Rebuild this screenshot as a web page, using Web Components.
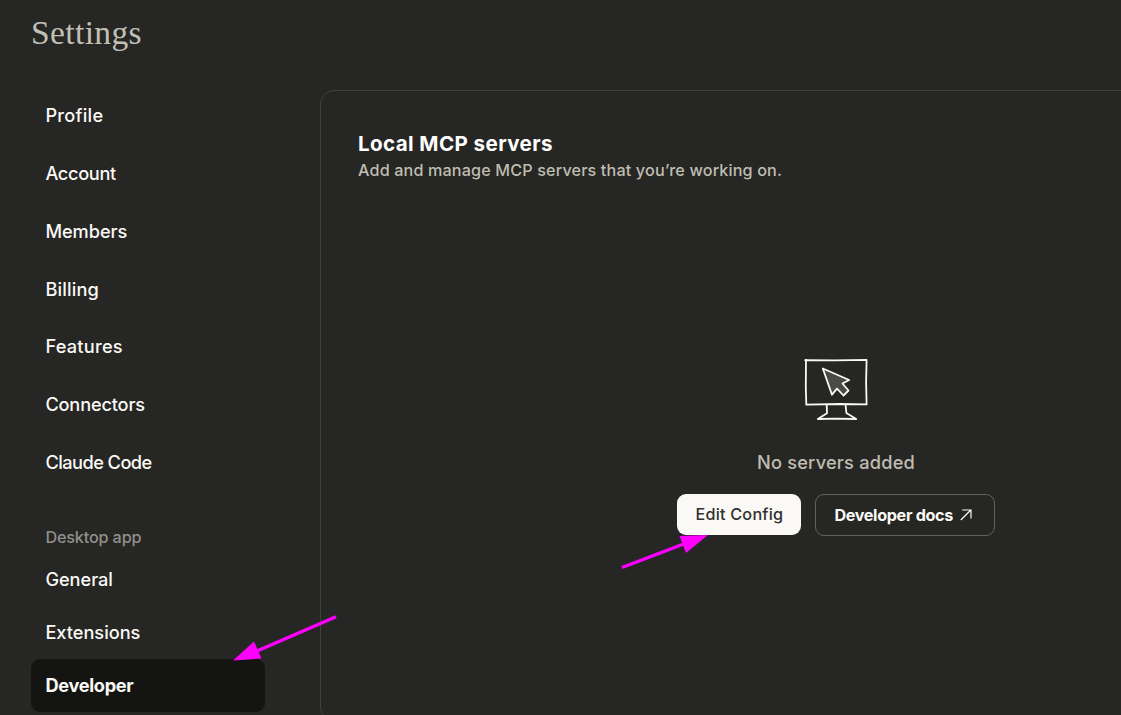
<!DOCTYPE html>
<html lang="en">
<head>
<meta charset="utf-8">
<title>Settings</title>
<style>
html,body{margin:0;height:100%;overflow:hidden;background:#262624}
</style>
</head>
<body>
<settings-page></settings-page>
<script>
const define = (name, html, setup) => {
  const t = document.createElement('template');
  t.innerHTML = html;
  customElements.define(name, class extends HTMLElement {
    connectedCallback() {
      if (this.shadowRoot) return;
      this.attachShadow({mode: 'open'}).append(t.content.cloneNode(true));
      if (setup) setup(this);
    }
  });
};

/* Single-line label whose tracking is adjusted so it spans the given measure. */
define('fit-text', `<style>:host{display:inline-block;white-space:nowrap}span{display:inline-block}</style><span><slot></slot></span>`, el => {
  const span = el.shadowRoot.querySelector('span');
  const n = el.textContent.length, w = span.getBoundingClientRect().width;
  span.style.letterSpacing = ((+el.getAttribute('measure') - w) / n).toFixed(3) + 'px';
});

define('nav-item', `<style>
:host{display:flex;align-items:center;box-sizing:border-box;height:var(--row,57.8px);padding:0 0 .4px 14.4px;border-radius:9px;color:#faf9f5;font-weight:500;font-size:18.2px}
:host([active]){background:#141413;font-weight:700}
</style><slot></slot>`);

define('side-nav', `<style>
:host{display:block;width:234px;margin-left:31px}
.main{padding-top:22.6px}
h2{margin:0;padding:35.6px 0 0 14.4px;height:26px;line-height:21px;font-size:16.2px;font-weight:450;color:#91908a}
.app{--row:53px}
</style>
<div class="main">
<nav-item><fit-text measure="58">Profile</fit-text></nav-item>
<nav-item><fit-text measure="70.5">Account</fit-text></nav-item>
<nav-item><fit-text measure="82">Members</fit-text></nav-item>
<nav-item><fit-text measure="53.5">Billing</fit-text></nav-item>
<nav-item><fit-text measure="77.5">Features</fit-text></nav-item>
<nav-item><fit-text measure="99.5">Connectors</fit-text></nav-item>
<nav-item><fit-text measure="106.3">Claude Code</fit-text></nav-item>
</div>
<h2><fit-text measure="96">Desktop app</fit-text></h2>
<div class="app">
<nav-item><fit-text measure="67.5">General</fit-text></nav-item>
<nav-item><fit-text measure="95">Extensions</fit-text></nav-item>
<nav-item active><fit-text measure="88">Developer</fit-text></nav-item>
</div>`);

define('monitor-icon', `<style>:host{display:block;width:66px;height:64px}svg{display:block}</style>
<svg width="66" height="64" viewBox="803 357 66 64" fill="none" stroke="#faf9f5" stroke-width="1.8" stroke-linejoin="round" stroke-linecap="round">
<path d="M805.2 360.2L835 360.4L866.6 359.8L866.1 382L866.6 404.4L840 404L806.3 404.6L805.8 387L806 360"/>
<path d="M826.7 405L827 413.2L817.8 419L836 418.6L856.2 419L846.4 413L845.6 405"/>
<path fill="#4a4a48" d="M822.8 368.5L849.2 380L842.5 383.5L848.5 390.5L843.5 395.5L837 388.7L832 394.7Z"/>
</svg>`);

define('action-button', `<style>
:host{display:flex;align-items:center;box-sizing:border-box;width:124px;height:41px;padding:0 0 1.5px 18.4px;border-radius:9px;background:#faf9f5;color:#30302e;font-size:16.2px;font-weight:500}
:host([outline]){width:180px;height:42px;padding-bottom:0;background:none;border:1px solid #61615d;color:#faf9f5;font-weight:700}
</style><slot></slot>`);

define('arrow-icon', `<style>:host{display:block;margin:-1px 0 0 6.5px}svg{display:block}</style>
<svg width="12" height="12" viewBox="0 0 12 12" fill="none" stroke="#faf9f5" stroke-width="1.2"><path d="M.8 11L10.8 1M2.2 1H11V9.4"/></svg>`);

define('server-panel', `<style>
:host{display:flex;flex-direction:column;box-sizing:border-box;flex:1;margin:90px -20px -2px 55px;height:631px;border:1px solid #40403d;border-radius:14px;padding:40px 0 0 37px}
h2{margin:0;height:26px;line-height:26px;font-size:20.6px;font-weight:700;color:#fff}
p{margin:0;color:#bfbdb0;font-weight:450;white-space:nowrap}
.desc{height:26px;line-height:27px;font-size:16.2px}
.empty{display:flex;flex-direction:column;align-items:center;width:318px;margin:174px 0 0 319px}
.none{margin-top:29px;height:24px;line-height:24px;font-size:18.2px}
.row{display:flex;gap:14px;margin-top:20px;width:318px}
</style>
<h2><fit-text measure="195">Local MCP servers</fit-text></h2>
<p class="desc"><fit-text measure="424">Add and manage MCP servers that you’re working on.</fit-text></p>
<div class="empty"><monitor-icon></monitor-icon>
<p class="none"><fit-text measure="158">No servers added</fit-text></p>
<div class="row">
<action-button><fit-text measure="88">Edit Config</fit-text></action-button>
<action-button outline><fit-text measure="118.6">Developer docs</fit-text><arrow-icon></arrow-icon></action-button>
</div></div>`);

/* Annotation arrow laid over the page. */
define('callout-arrow', `<style>:host{position:absolute;pointer-events:none}svg{display:block;overflow:visible}</style>
<svg fill="#f0f" stroke="none"><line stroke="#f0f" stroke-width="3.4"/><polygon/></svg>`, el => {
  const r = el.shadowRoot, s = r.querySelector('svg'), l = r.querySelector('line');
  s.setAttribute('width', el.getAttribute('w')); s.setAttribute('height', el.getAttribute('h'));
  el.getAttribute('line').split(' ').forEach((v, i) => l.setAttribute(['x1','y1','x2','y2'][i], v));
  r.querySelector('polygon').setAttribute('points', el.getAttribute('head'));
});

define('settings-page', `<style>
:host{display:block;position:relative;width:1121px;height:715px;overflow:hidden;background:#262624;font-family:Inter,Roboto,"Liberation Sans",sans-serif}
h1{margin:0;height:66px;padding-left:31px;font:400 33.5px/66px "Liberation Serif",serif;color:#c2c0b6}
.body{display:flex;margin-top:-66px}
side-nav{padding-top:64px;flex:none}
callout-arrow.a{left:233px;top:615px}
callout-arrow.b{left:621px;top:534px}
</style>
<h1><fit-text measure="111">Settings</fit-text></h1>
<div class="body"><side-nav></side-nav><server-panel></server-panel></div>
<callout-arrow class="a" w="104" h="47" line="103 1.7 24 36" head="0,45.5 21,26.5 28.5,43.5"></callout-arrow>
<callout-arrow class="b" w="87" h="35" line="1 33.5 64 9.5" head="87,1 58.5,2 65,19"></callout-arrow>`);
</script>
</body>
</html>
